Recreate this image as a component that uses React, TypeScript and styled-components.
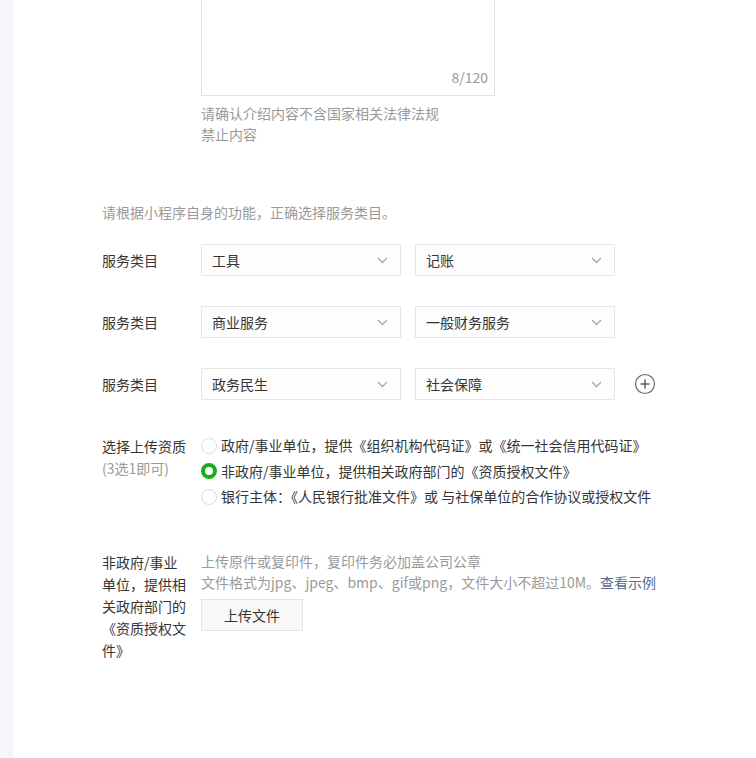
import React from 'react'
import styled, { createGlobalStyle } from 'styled-components'

const GlobalStyle = createGlobalStyle`
  html, body {
    margin: 0;
    padding: 0;
    background: #fff;
  }
  body {
    font-family: 'Noto Sans CJK SC', 'Noto Sans', 'Liberation Sans', sans-serif;
    font-size: 14px;
    color: #353535;
  }
`

const Page = styled.div`
  display: flex;
  min-height: 758px;
  overflow: hidden;
`
const SideStrip = styled.div`
  width: 13px;
  flex-shrink: 0;
  background: #f5f7fa;
`
const Main = styled.div`
  flex: 1;
  padding-left: 89px;
  display: flex;
  flex-direction: column;
`
const FieldRow = styled.div<{ $mt?: number }>`
  display: flex;
  align-items: flex-start;
  margin-top: ${(p) => p.$mt ?? 0}px;
`
const Label = styled.div<{ $pt?: number }>`
  width: 86px;
  margin-right: 13px;
  flex-shrink: 0;
  line-height: 22px;
  padding-top: ${(p) => p.$pt ?? 0}px;
  color: #353535;
`
const Sub = styled.span`
  display: block;
  color: #9a9a9a;
`
const Controls = styled.div`
  display: flex;
  flex-direction: column;
`
const TextArea = styled.div`
  position: relative;
  width: 292px;
  height: 134px;
  margin-top: -40px;
  border: 1px solid #e4e4e4;
  background: #fff;
`
const Counter = styled.span`
  position: absolute;
  right: 6px;
  bottom: 8px;
  color: #9a9a9a;
  font-size: 14px;
`
const Tip = styled.div<{ $w?: number; $mt?: number }>`
  color: #9a9a9a;
  line-height: 21px;
  margin-top: ${(p) => p.$mt ?? 0}px;
  max-width: ${(p) => (p.$w ? `${p.$w}px` : 'none')};
`
const SectionTip = styled.div`
  color: #9a9a9a;
  line-height: 21px;
  margin-top: 57px;
`
const SelectRow = styled.div`
  display: flex;
  align-items: center;
  gap: 14px;
`
const CategoryRow = styled.div<{ $mt: number }>`
  display: flex;
  align-items: center;
  margin-top: ${(p) => p.$mt}px;
`
const RowLabel = styled.div`
  width: 86px;
  margin-right: 13px;
  flex-shrink: 0;
`
const Select = styled.div`
  box-sizing: border-box;
  width: 200px;
  height: 32px;
  border: 1px solid #e6e6e6;
  background: #fdfdfd;
  display: flex;
  align-items: center;
  justify-content: space-between;
  padding: 0 12px 0 10px;
  color: #353535;
`
const AddButton = styled.div`
  margin-left: 19px;
  display: flex;
`
const RadioList = styled.div`
  display: flex;
  flex-direction: column;
`
const RadioItem = styled.label`
  display: flex;
  align-items: center;
  line-height: 25.5px;
  color: #353535;
  white-space: nowrap;
`
const RadioDot = styled.span<{ $checked?: boolean }>`
  box-sizing: border-box;
  width: 16px;
  height: 16px;
  border-radius: 50%;
  margin-right: 4px;
  background: #fff;
  border: ${(p) => (p.$checked ? '4px solid #1aad19' : '1px solid #dcdcdc')};
`
const Link = styled.a`
  color: #576b95;
  text-decoration: none;
`
const UploadButton = styled.button`
  box-sizing: border-box;
  margin-top: 6px;
  width: 102px;
  height: 32px;
  border: 1px solid #e4e4e4;
  background: #f8f8f8;
  color: #353535;
  font-family: inherit;
  font-size: 14px;
  padding: 0;
`

const Chevron: React.FC = () => (
  <svg width="11" height="7" viewBox="0 0 11 7">
    <polyline points="1,1 5.5,5.5 10,1" fill="none" stroke="#a8a8a8" strokeWidth="1.3" />
  </svg>
)

const PlusCircle: React.FC = () => (
  <svg width="22" height="22" viewBox="0 0 22 22">
    <circle cx="11" cy="11" r="9.5" fill="none" stroke="#6b6b6b" strokeWidth="1.2" />
    <line x1="6.5" y1="11" x2="15.5" y2="11" stroke="#555" strokeWidth="1.4" />
    <line x1="11" y1="6.5" x2="11" y2="15.5" stroke="#555" strokeWidth="1.4" />
  </svg>
)

const categories = [
  ['工具', '记账'],
  ['商业服务', '一般财务服务'],
  ['政务民生', '社会保障'],
]

const options = [
  '政府/事业单位，提供《组织机构代码证》或《统一社会信用代码证》',
  '非政府/事业单位，提供相关政府部门的《资质授权文件》',
  '银行主体：《人民银行批准文件》或 与社保单位的合作协议或授权文件',
]

const App: React.FC = () => {
  return (
    <>
      <GlobalStyle />
      <Page>
        <SideStrip />
        <Main>
          <FieldRow>
            <Label />
            <Controls>
              <TextArea>
                <Counter>8/120</Counter>
              </TextArea>
              <Tip $w={245} $mt={7}>
                请确认介绍内容不含国家相关法律法规禁止内容
              </Tip>
            </Controls>
          </FieldRow>

          <SectionTip>请根据小程序自身的功能，正确选择服务类目。</SectionTip>

          {categories.map(([first, second], i) => (
            <CategoryRow key={i} $mt={i === 0 ? 21 : 30}>
              <RowLabel>服务类目</RowLabel>
              <SelectRow>
                <Select>
                  {first}
                  <Chevron />
                </Select>
                <Select>
                  {second}
                  <Chevron />
                </Select>
              </SelectRow>
              {i === categories.length - 1 && (
                <AddButton>
                  <PlusCircle />
                </AddButton>
              )}
            </CategoryRow>
          ))}

          <FieldRow $mt={33}>
            <Label $pt={2}>
              选择上传资质
              <Sub>(3选1即可)</Sub>
            </Label>
            <RadioList>
              {options.map((text, i) => (
                <RadioItem key={i}>
                  <RadioDot $checked={i === 1} />
                  {text}
                </RadioItem>
              ))}
            </RadioList>
          </FieldRow>

          <FieldRow $mt={41}>
            <Label>非政府/事业单位，提供相关政府部门的《资质授权文件》</Label>
            <Controls>
              <Tip>上传原件或复印件，复印件务必加盖公司公章</Tip>
              <Tip>
                文件格式为jpg、jpeg、bmp、gif或png，文件大小不超过10M。<Link href="#">查看示例</Link>
              </Tip>
              <UploadButton>上传文件</UploadButton>
            </Controls>
          </FieldRow>
        </Main>
      </Page>
    </>
  )
}

export default App
